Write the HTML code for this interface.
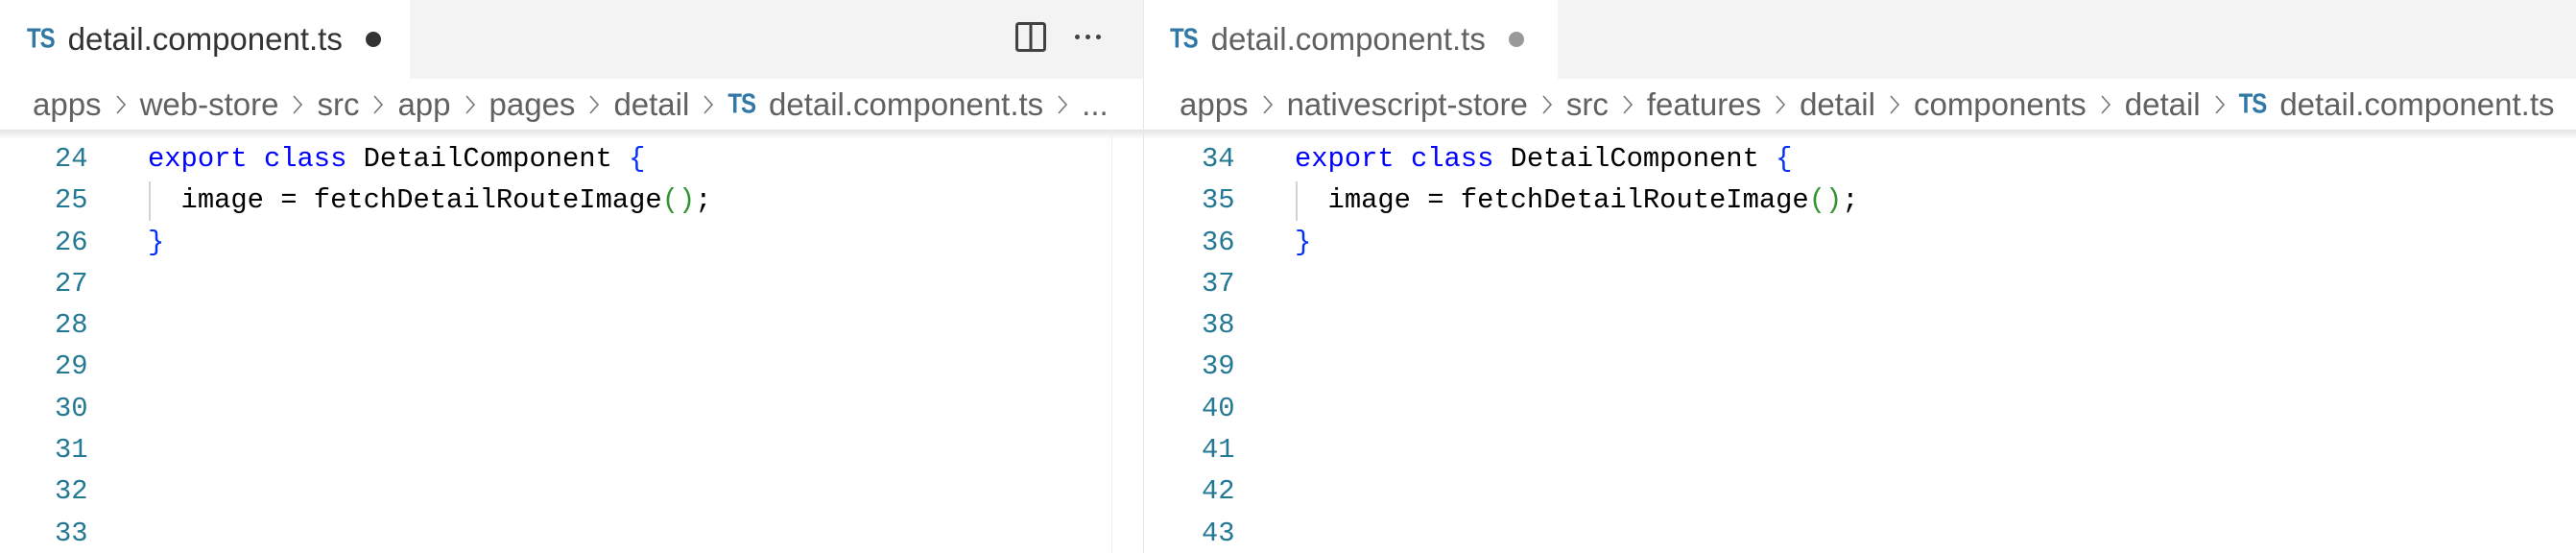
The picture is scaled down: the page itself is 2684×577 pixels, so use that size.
<!DOCTYPE html>
<html><head><meta charset="utf-8"><style>
*{margin:0;padding:0;box-sizing:border-box}
body{width:2684px;height:576px;overflow:hidden;background:#fff;position:relative;font-family:"Liberation Sans",sans-serif}
.abs{position:absolute}
.tabbar{top:0;height:82px;background:#f3f3f3}
.tab{top:0;height:82px;background:#fff;display:flex;align-items:center;padding-left:28px;font-size:33px;white-space:nowrap}
.ts{color:#3178a6;font-weight:bold;font-size:24px;margin-right:14px;letter-spacing:-1px;transform:scaleY(1.2);display:inline-block}
.crumbs{top:82px;height:53px;display:flex;align-items:center;font-size:33px;color:#616161;white-space:nowrap}
.chev{display:inline-block;width:12px;height:24px;margin:0 14px}
.shadow{top:135px;height:10px;background:linear-gradient(#e4e4e4,rgba(255,255,255,0))}
.ln{font-family:"Liberation Mono",monospace;font-size:28.8px;color:#237893;line-height:43.3px}
.code{font-family:"Liberation Mono",monospace;font-size:28.8px;color:#000;line-height:43.3px;white-space:pre}
.kw{color:#0000ff}.br{color:#0431fa}.pa{color:#319331}
</style></head><body>
<div class="abs tabbar" style="left:0;width:2684px"></div>
<div class="abs tab" style="left:0;width:427px;color:#333"><span class="ts">TS</span>detail.component.ts<span style="display:inline-block;width:16px;height:16px;border-radius:50%;background:#333;margin-left:24px"></span></div>
<svg class="abs" style="left:1058px;top:23px" width="32" height="31" viewBox="0 0 32 31"><rect x="1.5" y="1.5" width="29" height="28" rx="2" fill="none" stroke="#424242" stroke-width="3"/><line x1="16" y1="2" x2="16" y2="29" stroke="#424242" stroke-width="3"/></svg>
<div class="abs" style="left:1120px;top:36px;display:flex;gap:6px"><i style="width:5px;height:5px;background:#424242;border-radius:50%"></i><i style="width:5px;height:5px;background:#424242;border-radius:50%"></i><i style="width:5px;height:5px;background:#424242;border-radius:50%"></i></div>
<div class="abs tab" style="left:1191px;width:432px;color:#616161"><span class="ts">TS</span>detail.component.ts<span style="display:inline-block;width:16px;height:16px;border-radius:50%;background:#999;margin-left:24px"></span></div>
<div class="abs" style="left:1191px;top:0;width:1px;height:82px;background:#e8e8e8"></div>

<div class="abs crumbs" style="left:34px;width:1124px;overflow:hidden">apps<svg class="chev" viewBox="0 0 12 24"><path d="M2 3L10 12L2 21" fill="none" stroke="#777" stroke-width="1.6"/></svg>web-store<svg class="chev" viewBox="0 0 12 24"><path d="M2 3L10 12L2 21" fill="none" stroke="#777" stroke-width="1.6"/></svg>src<svg class="chev" viewBox="0 0 12 24"><path d="M2 3L10 12L2 21" fill="none" stroke="#777" stroke-width="1.6"/></svg>app<svg class="chev" viewBox="0 0 12 24"><path d="M2 3L10 12L2 21" fill="none" stroke="#777" stroke-width="1.6"/></svg>pages<svg class="chev" viewBox="0 0 12 24"><path d="M2 3L10 12L2 21" fill="none" stroke="#777" stroke-width="1.6"/></svg>detail<svg class="chev" viewBox="0 0 12 24"><path d="M2 3L10 12L2 21" fill="none" stroke="#777" stroke-width="1.6"/></svg><span class="ts">TS</span>detail.component.ts<svg class="chev" viewBox="0 0 12 24"><path d="M2 3L10 12L2 21" fill="none" stroke="#777" stroke-width="1.6"/></svg>...</div>
<div class="abs crumbs" style="left:1229px;width:1455px;overflow:hidden">apps<svg class="chev" viewBox="0 0 12 24"><path d="M2 3L10 12L2 21" fill="none" stroke="#777" stroke-width="1.6"/></svg>nativescript-store<svg class="chev" viewBox="0 0 12 24"><path d="M2 3L10 12L2 21" fill="none" stroke="#777" stroke-width="1.6"/></svg>src<svg class="chev" viewBox="0 0 12 24"><path d="M2 3L10 12L2 21" fill="none" stroke="#777" stroke-width="1.6"/></svg>features<svg class="chev" viewBox="0 0 12 24"><path d="M2 3L10 12L2 21" fill="none" stroke="#777" stroke-width="1.6"/></svg>detail<svg class="chev" viewBox="0 0 12 24"><path d="M2 3L10 12L2 21" fill="none" stroke="#777" stroke-width="1.6"/></svg>components<svg class="chev" viewBox="0 0 12 24"><path d="M2 3L10 12L2 21" fill="none" stroke="#777" stroke-width="1.6"/></svg>detail<svg class="chev" viewBox="0 0 12 24"><path d="M2 3L10 12L2 21" fill="none" stroke="#777" stroke-width="1.6"/></svg><span class="ts">TS</span>detail.component.ts</div>
<div class="abs shadow" style="left:0;width:2684px"></div>
<div class="abs" style="left:1158px;top:135px;width:1px;height:441px;background:#ececec"></div>
<div class="abs" style="left:1191px;top:82px;width:1px;height:494px;background:#e5e5e5"></div>

<div class="abs ln" style="left:57px;top:144px">24<br>25<br>26<br>27<br>28<br>29<br>30<br>31<br>32<br>33</div>
<div class="abs code" style="left:154px;top:144px"><span class="kw">export</span> <span class="kw">class</span> DetailComponent <span class="br">{</span>
  image = fetchDetailRouteImage<span class="pa">()</span>;
<span class="br">}</span></div>
<div class="abs" style="left:155px;top:189px;width:2px;height:41px;background:#d3d3d3"></div>

<div class="abs ln" style="left:1252px;top:144px">34<br>35<br>36<br>37<br>38<br>39<br>40<br>41<br>42<br>43</div>
<div class="abs code" style="left:1349px;top:144px"><span class="kw">export</span> <span class="kw">class</span> DetailComponent <span class="br">{</span>
  image = fetchDetailRouteImage<span class="pa">()</span>;
<span class="br">}</span></div>
<div class="abs" style="left:1350px;top:189px;width:2px;height:41px;background:#d3d3d3"></div>
</body></html>
